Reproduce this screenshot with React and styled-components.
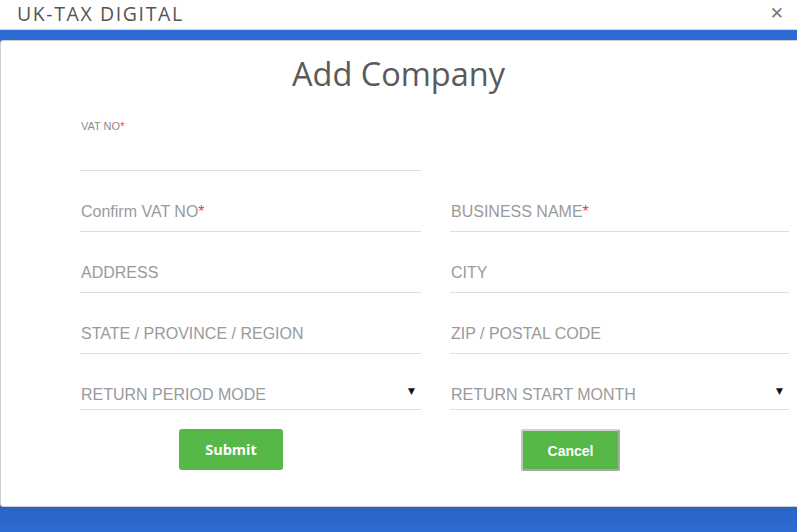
import React from "react";
import styled, { createGlobalStyle } from "styled-components";

const Global = createGlobalStyle`
  html, body { margin: 0; padding: 0; }
  body { background: #2d6cd3; overflow: hidden; font-family: "Liberation Sans", Arial, sans-serif; }
  * { box-sizing: border-box; }
`;

const Page = styled.div`
  width: 797px;
  height: 532px;
  display: flex;
  flex-direction: column;
  background: linear-gradient(#2d6cd3, #2d6cd3 480px, #2a63c2 506px, #2d6cd3 532px);
  overflow: hidden;
`;

const TopBar = styled.header`
  height: 30px;
  flex: none;
  background: #fff;
  border-bottom: 1px solid #d6d6d6;
  display: flex;
  align-items: center;
  justify-content: space-between;
  padding: 0 13px 0 17px;
`;

const Brand = styled.h1`
  margin: 0;
  font-family: "Open Sans", "Noto Sans", sans-serif;
  font-weight: 400;
  font-size: 19.5px;
  letter-spacing: 1.6px;
  color: #555;
  line-height: 1;
  padding-bottom: 2px;
`;

const Close = styled.span`
  font-family: "DejaVu Sans", sans-serif;
  font-size: 17px;
  font-weight: 700;
  color: #7a7a7a;
  line-height: 1;
  padding-bottom: 3px;
`;

const Band = styled.div`
  flex: 1;
  padding-top: 10px;
`;

const Card = styled.section`
  width: 810px;
  height: 467px;
  background: #fff;
  border: 1px solid #cfcfcf;
  border-radius: 3px;
  padding: 11px 0 0 79px;
`;

const Title = styled.h2`
  margin: 0 0 0 -80px;
  width: 797px;
  text-align: center;
  font-family: "Open Sans", "Noto Sans", sans-serif;
  font-weight: 400;
  font-size: 32.5px;
  color: #5a5a5a;
  line-height: 44px;
`;

const Grid = styled.div`
  display: grid;
  grid-template-columns: 341px 339px;
  column-gap: 29px;
  margin-top: 19px;
`;

const Field = styled.div`
  position: relative;
  height: ${(p) => p.$h}px;
  border-bottom: 1px solid #dedede;
  display: flex;
  align-items: flex-end;
  padding: 0 0 ${(p) => p.$pb}px 1px;
`;

const SmallLabel = styled.label`
  position: absolute;
  top: 5px;
  left: 1px;
  font-size: 11px;
  color: #8a8a8a;
`;

const Label = styled.span`
  font-size: 16px;
  color: #9a9a9a;
  line-height: 18px;
`;

const Star = styled.span`
  color: #f33;
`;

const Caret = styled.span`
  position: absolute;
  right: 6px;
  top: ${(p) => p.$top}px;
  font-size: 9px;
  color: #111;
  font-family: "DejaVu Sans", sans-serif;
`;

const Actions = styled.div`
  display: flex;
  padding: 19px 0 0 99px;
  gap: 238px;
  align-items: flex-start;
`;

const SubmitButton = styled.button`
  width: 104px;
  height: 41px;
  border: none;
  border-radius: 3px;
  background: #56b847;
  color: #fff;
  font-family: "Open Sans", "Noto Sans", sans-serif;
  font-weight: 700;
  font-size: 14.5px;
  padding: 0;
`;

const CancelButton = styled.button`
  width: 99px;
  height: 42px;
  margin-top: 0;
  border: 2px solid #a8a8a8;
  border-top-color: #d2d2d2;
  border-left-color: #c4c4c4;
  border-radius: 2px;
  background: #56b847;
  color: #fff;
  font-family: "Liberation Sans", Arial, sans-serif;
  font-weight: 700;
  font-size: 14px;
  padding: 1px 0 0;
`;

const rows = [
  [
    { label: "Confirm VAT NO", req: true },
    { label: "BUSINESS NAME", req: true },
  ],
  [{ label: "ADDRESS" }, { label: "CITY" }],
  [{ label: "STATE / PROVINCE / REGION" }, { label: "ZIP / POSTAL CODE" }],
];

export default function App() {
  return (
    <>
      <Global />
      <Page>
        <TopBar>
          <Brand>UK-TAX DIGITAL</Brand>
          <Close>✕</Close>
        </TopBar>
        <Band>
          <Card>
            <Title>Add Company</Title>
            <Grid>
              <Field $h={56} $pb={0}>
                <SmallLabel>
                  VAT NO<Star>*</Star>
                </SmallLabel>
              </Field>
              <div />
              {rows.map((r) =>
                r.map((f) => (
                  <Field key={f.label} $h={61} $pb={10}>
                    <Label>
                      {f.label}
                      {f.req && <Star>*</Star>}
                    </Label>
                  </Field>
                ))
              )}
              <Field $h={56} $pb={5}>
                <Label>RETURN PERIOD MODE</Label>
                <Caret $top={32}>▼</Caret>
              </Field>
              <Field $h={56} $pb={5}>
                <Label>RETURN START MONTH</Label>
                <Caret $top={32}>▼</Caret>
              </Field>
            </Grid>
            <Actions>
              <SubmitButton>Submit</SubmitButton>
              <CancelButton>Cancel</CancelButton>
            </Actions>
          </Card>
        </Band>
      </Page>
    </>
  );
}
